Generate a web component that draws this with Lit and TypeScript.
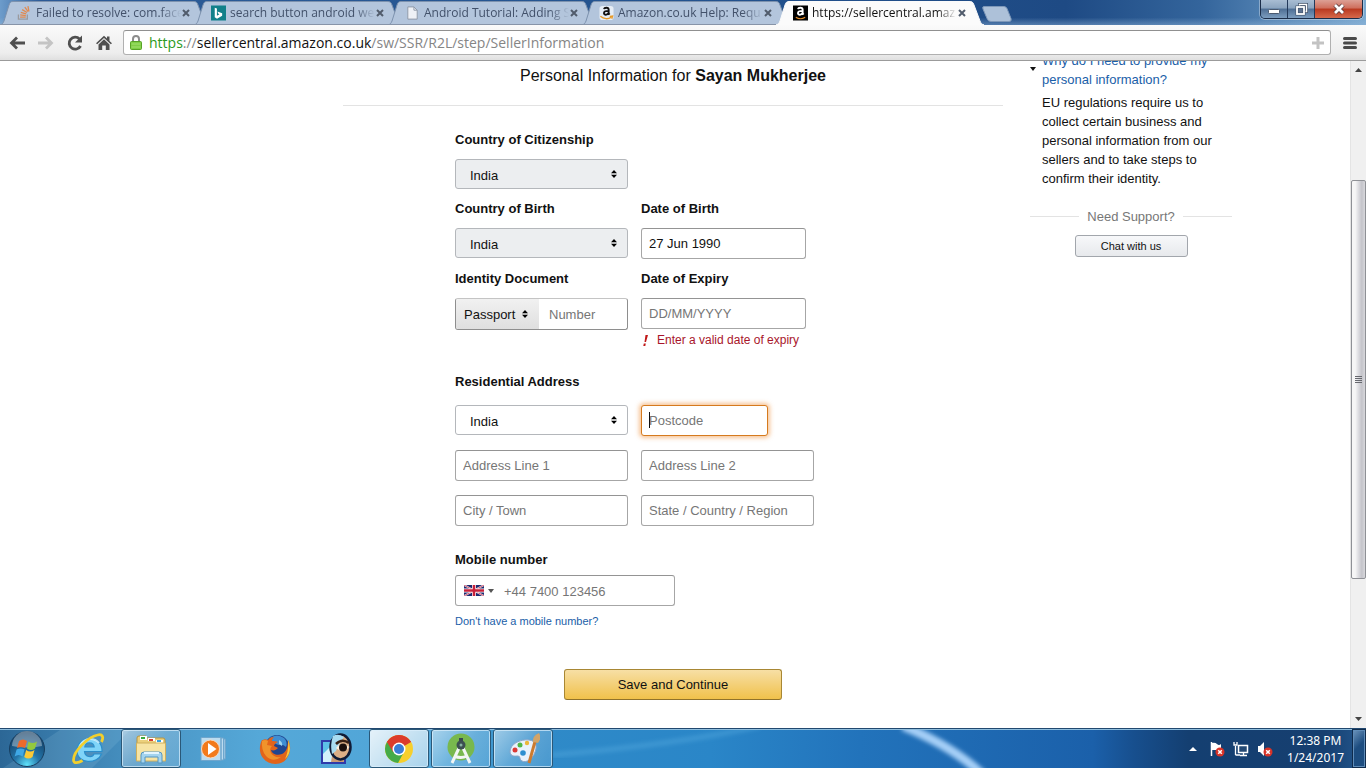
import { LitElement, html, css, svg, nothing } from "lit";
import { customElement } from "lit/decorators.js";

const sortArrows = html`<svg class="sort" viewBox="0 0 6 8" width="6" height="8" aria-hidden="true">
  <path d="M3 0 6 3.200H0zM3 8 0 4.800h6z" fill="#000" />
</svg>`;

const favicons: Record<string, unknown> = {
  stack: svg`<g fill="none" stroke-width="1.4"><path d="M1.5 9.5v5h9.5v-5" stroke="#9a9a9e"/><path d="M3.3 12.4h6M3.4 10l6 .7M4 7.3l5.8 1.700M5.500 4.400l5.200 3.100M8.300 1.800l3.600 4.800M11.700.600l1 5.800" stroke="#e08a50"/></g>`,
  bing: svg`<rect width="16" height="16" fill="#11808a"/><path d="M4 2.500l2.300.800v7.500L9 9.300 7.600 8.600 6.900 6.500l5 1.800v2.600L6.400 14 4 12.600z" fill="#fff"/>`,
  file: svg`<path d="M3 1.500h6.500L13 5v9.500H3z" fill="#eef1f6" stroke="#8e98a8"/><path d="M9.500 1.500V5H13" fill="none" stroke="#8e98a8"/>`,
  amazon: svg`<rect x=".5" y=".5" width="15" height="15" rx="3" fill="#e6edf5"/><path d="M5.300 3.900C5.700 1.900 10.300 1.600 10.300 4.500v3.900l1 1.300M10 5.700C6.800 5.700 5.300 6.600 5.300 8.200c0 2.200 3.600 2.300 4.900-.3" fill="none" stroke="#111" stroke-width="2"/><path d="M1.500 11.500c3.700 3.300 8.500 3.300 11.500 1M11.500 11.500l3-.2-.9 2.800" fill="none" stroke="#e79a28" stroke-width="1.400"/>`,
  amazonDark: svg`<rect width="16" height="16" fill="#000"/><path d="M5.300 3.900C5.700 1.900 10.300 1.600 10.300 4.500v3.900l1 1.300M10 5.700C6.800 5.700 5.300 6.600 5.300 8.200c0 2.200 3.600 2.300 4.900-.3" fill="none" stroke="#fff" stroke-width="2"/><path d="M3 12.500c3 2 7 2 10 0" fill="none" stroke="#e08a28" stroke-width="1.200"/>`,
};

const tabs = [
  { icon: "stack", title: "Failed to resolve: com.face" },
  { icon: "bing", title: "search button android wel" },
  { icon: "file", title: "Android Tutorial: Adding S" },
  { icon: "amazon", title: "Amazon.co.uk Help: Requ" },
  { icon: "amazonDark", title: "https://sellercentral.amaz", active: true },
];

@customElement("browser-chrome")
class BrowserChrome extends LitElement {
  static styles = css`
    :host { display: block; font-family: "Open Sans", "Noto Sans", sans-serif; }
    button { border: 0; padding: 0; margin: 0; background: none; font: inherit; color: inherit; display: flex; align-items: center; justify-content: center; }
    .strip { display: flex; height: 25px; background:
      linear-gradient(to bottom, rgba(255,255,255,0) 70%, rgba(150,185,220,.45)),
      linear-gradient(to right, #6d9ccb 0, #2c5a96 3%, #2a5a96 15%, #23538f 50%, #1e4a84 78%, #34659c 88%, #7ba9d0 100%); }
    .tab { position: relative; flex: 0 1 208px; min-width: 0; height: 25px; margin-right: -14px; display: flex; align-items: center; padding: 1px 18px 0 17px; box-sizing: border-box; color: #42516a; }
    .tab.active { color: #111; z-index: 3; }
    .shape { position: absolute; inset: 0; width: 100%; height: 25px; }
    .favicon { position: relative; flex: none; width: 15px; height: 16px; margin-right: 4px; }
    .title { position: relative; flex: 1; min-width: 0; overflow: hidden; white-space: nowrap; text-align: left; font-size: 12px; line-height: 18px; -webkit-mask-image: linear-gradient(to right, #000 86%, transparent); mask-image: linear-gradient(to right, #000 86%, transparent); }
    .close { position: relative; flex: none; width: 9px; height: 16px; }
    .plus-tab { width: 30px; height: 16px; margin: 6px 0 0 12px; }
    .grow { flex: 1; }
    .window { display: flex; height: 18px; margin-right: 3px; border: 1px solid #1b2d49; border-top: 0; border-radius: 0 0 5px 5px; overflow: hidden; box-shadow: 0 0 0 1px rgba(255,255,255,.35); }
    .window button { width: 27px; height: 18px; border-right: 1px solid #23395a; background: linear-gradient(#a9bdd3, #8ba4bf 45%, #4e6e94 50%, #7c9dbf); }
    .window .exit { width: 47px; border: 0; background: linear-gradient(#dca095, #cf6e5c 45%, #b93920 50%, #d6694b); }
    .bar { display: flex; align-items: center; height: 36px; box-sizing: border-box; border-bottom: 1px solid #9b9b9b; background: linear-gradient(#fafafa, #ededed 80%, #e0e0e0); padding: 0 9px 0 8px; }
    .nav { display: flex; gap: 11px; margin-right: 10px; }
    .nav button { width: 18px; height: 20px; }
    .address { flex: 1; min-width: 0; display: flex; align-items: center; height: 25px; box-sizing: border-box; background: #fff; border: 1px solid #b0b0b0; border-top-color: #909090; border-radius: 3px; padding: 0 6px 0 5px; margin-right: 12px; }
    .url { flex: 1; min-width: 0; white-space: nowrap; overflow: hidden; margin-left: 6px; font-size: 14px; line-height: 22px; color: #858585; }
    .secure { color: #2a9a20; }
    .host { color: #111; }
  `;

  render() {
    return html`
      <div class="strip" role="tablist">
        ${tabs.map((t) => html`
          <div class="tab ${t.active ? "active" : ""}" role="tab">
            <svg class="shape" viewBox="0 0 208 25" preserveAspectRatio="none" aria-hidden="true">
              <path d="M0 25C3 24 3 23 4 21L9 5C10 2 11 1.500 13 1.500H193C196 1.500 197 2 198 5L204 21C205 23 205 24 208 25Z"
                fill=${t.active ? "#fbfbfb" : "#b3c5dc"} stroke=${t.active ? "#fbfbfb" : "#7d92ae"} />
              ${t.active ? nothing : svg`<path d="M0 24.500H208" stroke="#8794a8"/>`}
            </svg>
            <svg class="favicon" viewBox="0 0 16 16" aria-hidden="true">${favicons[t.icon]}</svg>
            <span class="title">${t.title}</span>
            <button class="close" aria-label="Close tab">
              <svg width="8" height="8" viewBox="0 0 8 8"><path d="M1 1l6 6M7 1 1 7" stroke="#515c6c" stroke-width="2"/></svg>
            </button>
          </div>`)}
        <button class="plus-tab" aria-label="New tab">
          <svg width="30" height="16" viewBox="0 0 30 16"><path d="M2 .500h20q2 0 3 2l4 10q1 3-2 3H9q-3 0-4-3L1 3Q0 .500 2 .500z" fill="#adc1d9" stroke="#7e98b9"/></svg>
        </button>
        <div class="grow"></div>
        <div class="window">
          <button aria-label="Minimize"><svg width="14" height="12"><rect x="1.500" y="6.500" width="11" height="4" rx="1" fill="#fff" stroke="#4a5a70"/></svg></button>
          <button aria-label="Restore"><svg width="13" height="13"><path d="M4.500 1.500h7v7h-7z" fill="none" stroke="#43536a" stroke-width="3"/><path d="M4.500 1.500h7v7h-7z" fill="none" stroke="#fff" stroke-width="1.500"/><rect x="2" y="4" width="7" height="7" fill="#5c7290" stroke="#43536a" stroke-width="3"/><rect x="2" y="4" width="7" height="7" fill="none" stroke="#fff" stroke-width="1.800"/></svg></button>
          <button class="exit" aria-label="Close window"><svg width="14" height="12"><path d="M3 2l8 8M11 2l-8 8" stroke="#5b3a3c" stroke-width="4.500"/><path d="M3 2l8 8M11 2l-8 8" stroke="#fff" stroke-width="2.800"/></svg></button>
        </div>
      </div>
      <div class="bar">
        <div class="nav">
          <button aria-label="Back"><svg width="18" height="16"><path d="M17 8H3M9 2.500 3.500 8 9 13.500" fill="none" stroke="#4f4f4f" stroke-width="2.800"/></svg></button>
          <button aria-label="Forward"><svg width="18" height="16"><path d="M1 8h14M9 2.500 14.500 8 9 13.500" fill="none" stroke="#c4c4c4" stroke-width="2.800"/></svg></button>
          <button aria-label="Reload"><svg width="18" height="18"><path d="M14.500 12A6 6 0 1 1 13.500 5" fill="none" stroke="#4f4f4f" stroke-width="2.800"/><path d="M16 1.500V8.500H9z" fill="#4f4f4f"/></svg></button>
          <button aria-label="Home"><svg width="16" height="16"><path d="M0 8.300 8 .800l3 2.800V1.500h2.500V6L16 8.300l-1.200 1L8 3 1.200 9.300z" fill="#4f4f4f"/><path d="M8 4.300l5.500 5.200V15H9.800v-4.500H6.200V15H2.500V9.500z" fill="#4f4f4f"/></svg></button>
        </div>
        <div class="address">
          <svg width="14" height="17" aria-hidden="true"><path d="M4 8V5a3 3 0 0 1 6 0v3" fill="none" stroke="#8c8c8c" stroke-width="2"/><rect x="1.500" y="7.500" width="11" height="8" rx="1" fill="#7fce45" stroke="#57a226"/><path d="M2.500 10h9M2.500 13h9" stroke="#a5e073"/></svg>
          <div class="url"><span class="secure">https</span>://<span class="host">sellercentral.amazon.co.uk</span>/sw/SSR/R2L/step/SellerInformation</div>
          <svg width="12" height="12" aria-hidden="true"><path d="M6 0v12M0 6h12" stroke="#c3c3c3" stroke-width="3"/></svg>
        </div>
        <button aria-label="Menu"><svg width="14" height="14"><path d="M1.500 2.500h11M1.500 7h11M1.500 11.500h11" stroke="#4a4a4a" stroke-width="3" stroke-linecap="round"/></svg></button>
      </div>`;
  }
}

@customElement("seller-page")
class SellerPage extends LitElement {
  static styles = css`
    :host { display: flex; min-height: 0; background: #fff; color: #111; font: 13px/19px "Liberation Sans", Arial, sans-serif; }
    .view { flex: 1; min-width: 0; overflow: hidden; }
    .container { display: flex; gap: 27px; max-width: 1114px; margin: 0 auto; }
    .main { flex: 1; min-width: 0; margin-left: 225px; padding-top: 3px; }
    h1 { margin: 0; padding-bottom: 17px; border-bottom: 1px solid #e3e3e3; font-size: 16px; line-height: 24px; font-weight: 400; text-align: center; }
    form { display: flex; flex-direction: column; max-width: 436px; margin: 24px auto 0; }
    label, legend { display: block; padding: 0; font-weight: 700; margin-bottom: 10px; }
    fieldset { border: 0; padding: 0; margin: 0; min-width: 0; }
    .row { display: flex; gap: 13px; margin-bottom: 10px; }
    .cell { width: 173px; }
    .date { width: 165px; }
    input, select { box-sizing: border-box; font: inherit; color: #111; margin: 0; height: 31px; width: 100%; border: 1px solid #a6a6a6; border-top-color: #949494; border-radius: 3px; background: #fff; padding: 0 7px; outline: 0; }
    input::placeholder { color: #767676; opacity: 1; }
    .pick { position: relative; }
    .pick select { appearance: none; height: 30px; padding: 2px 14px 0; display: block; border-color: #b4b7bb; }
    .pick.locked select { background: #eceef0; }
    .sort { position: absolute; right: 11px; top: 11px; pointer-events: none; }
    .document { display: flex; height: 32px; box-sizing: border-box; border: 1px solid #8e8e8e; border-top-color: #c4c4c4; border-radius: 3px; overflow: hidden; }
    .document .pick { flex: none; width: 83px; }
    .document select { border: 0; border-radius: 0; background: linear-gradient(#f1f1f1, #dfdfdf); padding: 0 8px; }
    .document input { flex: 1; min-width: 0; border: 0; height: 30px; padding: 0 10px; }
    .error { display: flex; align-items: center; gap: 9px; margin: 2px 0 0 2px; font-size: 12px; color: #a8152a; white-space: nowrap; }
    .address { margin-top: 12px; }
    .address legend { margin-bottom: 14px; }
    .address .row { margin-bottom: 14px; }
    .postcode { position: relative; width: 127px; }
    .postcode input { border-color: #d57a1e; box-shadow: 0 0 4px 2px rgba(240,140,50,.5); }
    .caret { position: absolute; left: 8px; top: 7px; width: 1px; height: 16px; background: #111; }
    .mobile { margin-top: 10px; }
    .mobile label { margin-bottom: 6px; }
    .phone { display: flex; align-items: center; width: 220px; height: 31px; box-sizing: border-box; border: 1px solid #a6a6a6; border-top-color: #949494; border-radius: 3px; padding-left: 8px; }
    .phone button { display: flex; align-items: center; gap: 4px; border: 0; padding: 0; background: none; }
    .phone input { flex: 1; min-width: 0; border: 0; height: 29px; padding: 2px 10px 0; background: none; }
    a { color: #1a5ea8; text-decoration: none; }
    .help { display: block; font-size: 11px; line-height: 16px; margin-top: 7px; }
    .save { align-self: center; width: 218px; height: 31px; margin-top: 40px; border: 1px solid #a88734; border-bottom-color: #8f722b; border-radius: 3px; background: linear-gradient(#f7dfa5, #f0c14b); font: inherit; color: #111; }
    aside { flex: none; width: 202px; margin-top: -10px; }
    .question { display: flex; align-items: flex-start; }
    .question svg { flex: none; margin: 16px 6px 0 0; }
    .answer { margin: 4px 20px 0 12px; }
    .support { display: flex; align-items: center; gap: 8px; margin-top: 19px; color: #777; }
    .support::before, .support::after { content: ""; flex: 1; border-top: 1px solid #e3e3e3; }
    .chat { display: block; width: 113px; height: 22px; margin: 9px auto 0; padding: 0; border: 1px solid #a2a6ac; border-radius: 3px; background: linear-gradient(#f7f8fa, #e7e9ec); font: 11px/18px "Liberation Sans", Arial, sans-serif; color: #111; }
    .scroll { flex: none; width: 16px; box-sizing: border-box; display: flex; flex-direction: column; background: #f0f0f0; border-left: 1px solid #e4e4e4; }
    .scroll button { height: 17px; border: 0; padding: 0; background: none; display: flex; align-items: center; justify-content: center; }
    .above { flex: 102; }
    .thumb { flex: 399; display: flex; align-items: center; justify-content: center; border: 1px solid #8f9196; border-radius: 2px; background: linear-gradient(to right, #f6f6f6 25%, #dcdce0 50%, #c4c4ca 75%, #d8d8dc); }
    .below { flex: 132; }
  `;

  private country(id: string, locked: boolean) {
    return html`<div class="pick ${locked ? "locked" : ""}">
      <select id=${id} aria-label="Country"><option>India</option></select>${sortArrows}
    </div>`;
  }

  render() {
    return html`
      <div class="view"><div class="container">
        <main class="main">
          <h1>Personal Information for <b>Sayan Mukherjee</b></h1>
          <form>
            <div class="row"><div class="cell"><label for="citizen">Country of Citizenship</label>${this.country("citizen", true)}</div></div>
            <div class="row">
              <div class="cell"><label for="birth">Country of Birth</label>${this.country("birth", true)}</div>
              <div class="date"><label for="dob">Date of Birth</label><input id="dob" .value=${"27 Jun 1990"} /></div>
            </div>
            <div class="row">
              <div class="cell">
                <label for="doc">Identity Document</label>
                <div class="document">
                  <div class="pick"><select id="doc"><option>Passport</option></select>${sortArrows}</div>
                  <input aria-label="Document number" placeholder="Number" />
                </div>
              </div>
              <div class="date">
                <label for="expiry">Date of Expiry</label><input id="expiry" placeholder="DD/MM/YYYY" />
                <div class="error"><svg width="5" height="11" viewBox="0 0 5 11" aria-hidden="true"><path d="M2.500 0H5L3 7H1.500zM.800 8.500h2L2.300 11h-2z" fill="#c01818"/></svg>Enter a valid date of expiry</div>
              </div>
            </div>
            <fieldset class="address">
              <legend>Residential Address</legend>
              <div class="row">
                <div class="cell">${this.country("residence", false)}</div>
                <div class="postcode"><input aria-label="Postcode" placeholder="Postcode" /><span class="caret"></span></div>
              </div>
              <div class="row">
                <div class="cell"><input aria-label="Address Line 1" placeholder="Address Line 1" /></div>
                <div class="cell"><input aria-label="Address Line 2" placeholder="Address Line 2" /></div>
              </div>
              <div class="row">
                <div class="cell"><input aria-label="City / Town" placeholder="City / Town" /></div>
                <div class="cell"><input aria-label="State / Country / Region" placeholder="State / Country / Region" /></div>
              </div>
            </fieldset>
            <div class="mobile">
              <label for="mobile">Mobile number</label>
              <div class="phone">
                <button type="button" aria-label="Country code">
                  <svg width="20" height="11" viewBox="0 0 20 11"><rect width="20" height="11" fill="#1d2a70"/><path d="M0 0l20 11M20 0 0 11" stroke="#e8e8f0" stroke-width="1.800"/><path d="M0 0l20 11M20 0 0 11" stroke="#d0203a" stroke-width=".700"/><path d="M10 0v11M0 5.500h20" stroke="#fff" stroke-width="4"/><path d="M10 0v11M0 5.500h20" stroke="#c8203a" stroke-width="2.600"/></svg>
                  <svg width="6" height="4"><path d="M0 0h6L3 4z" fill="#555"/></svg>
                </button>
                <input id="mobile" placeholder="+44 7400 123456" />
              </div>
              <a class="help" href="#mobile">Don't have a mobile number?</a>
            </div>
            <button class="save" type="button">Save and Continue</button>
          </form>
        </main>
        <aside>
          <div class="question"><svg width="6" height="4" aria-hidden="true"><path d="M0 0h6L3 4z" fill="#111"/></svg><a href="#why">Why do I need to provide my personal information?</a></div>
          <div class="answer">EU regulations require us to collect certain business and personal information from our sellers and to take steps to confirm their identity.</div>
          <div class="support">Need Support?</div>
          <button class="chat">Chat with us</button>
        </aside>
      </div></div>
      <div class="scroll">
        <button aria-label="Scroll up"><svg width="7" height="4"><path d="M3.500 0 7 4H0z" fill="#444"/></svg></button>
        <div class="above"></div>
        <div class="thumb"><svg width="7" height="8"><path d="M0 .500h7M0 2.500h7M0 4.500h7M0 6.500h7" stroke="#66686e"/></svg></div>
        <div class="below"></div>
        <button aria-label="Scroll down"><svg width="7" height="4"><path d="M0 0h7L3.500 4z" fill="#444"/></svg></button>
      </div>`;
  }
}

const apps = [
  { name: "Internet Explorer", open: false, art: svg`<path d="M30 19.500H12.500c.5 6 8 6.500 9.500 2.500h7.500C26 32 5 33 5 18.500 5 3 31 2 30 19.500zM12.800 15h9.400c-.5-5.500-8.900-5.500-9.400 0z" fill="#7fd4f8" stroke="#2a8ecb" stroke-width="1.200"/><path d="M8 14q3-7 10-7 6 0 9 4" fill="none" stroke="#d6f4ff" stroke-width="2" opacity=".8"/><path d="M29.500 10c2.500-5 1-8.500-4-7C16 5 1.500 19 1.500 28c0 4 5 3 9 .5" fill="none" stroke="#f2cf2c" stroke-width="2.800"/>` },
  { name: "Windows Explorer", open: true, art: svg`<path d="M3 6q0-2 2-2h7l1 2h16q2 0 2 2v20H3z" fill="#ecd07c" stroke="#b69440"/><path d="M6 4h7v4H6zM14 6h7v3h-7zM22 8h7v3h-7z" fill="#fff"/><path d="M7 5h4v2H7z" fill="#3aaa3c"/><path d="M15 7h4v2h-4z" fill="#d64030"/><path d="M23 8h4v2h-4z" fill="#38a2dd"/><path d="M2.500 11h29v18h-29z" fill="#f7e4a4" stroke="#d0b05c"/><path d="M7 31v-8q0-3 3-3h15q3 0 3 3v8h-4v-6H11v6z" fill="#a4d4ef" stroke="#5596c2"/><path d="M10 21h15" stroke="#e3f5ff" stroke-width="2"/>` },
  { name: "Media Player", open: false, art: svg`<path d="M5 5.500h20v23H5zM25 6h2.500v22H25zM28 7h1.500v20H28z" fill="#bcdcf0" stroke="#6fa6cd"/><circle cx="14.500" cy="17" r="9" fill="#f27a1c" stroke="#f7d8be"/><path d="M12 11v12l8.500-6z" fill="#fff"/>` },
  { name: "Firefox", open: false, art: svg`<circle cx="19" cy="15.500" r="12.500" fill="#21468f"/><path d="M12 6q7-5 14 0 4 4 2 9-3-3-7-2-5-1-9-7z" fill="#3f8ed2"/><path d="M21 8q4 2 3 6l-3-2z" fill="#9ed5ee"/><path d="M4 8c-3 6-3 13 1 18 6 8 19 8 24 0 4-6 4-13 1-18 0 8-2 12-6 14-5 2-10 0-11-4 3 1 5 0 7-2l-4-2c0-2 2-3 4-4-2-1-4-1-6-1 0-2 1-3 2-4-3 0-5 1-6 3-2-1-4-1-5 0z" fill="#e2641a"/><path d="M4 9q3-2 6 0l-1 4 5 1q-3 3-1 7 3 5 10 4-8 6-15-1-5-6-4-15z" fill="#f0932b"/><path d="M30 8q5 12-3 19 4-8 3-19z" fill="#f8c83c"/>` },
  { name: "Magnifier", open: false, art: svg`<path d="M2 9h23v22H2z" fill="#5cc0e8" stroke="#2f3bab" stroke-width="2"/><path d="M3 22l9-9 9 17H3z" fill="#d2f1fc"/><path d="M11 30q1-10 6-16l7 4v12z" fill="#c99a76"/><ellipse cx="20.500" cy="15" rx="10" ry="12.500" fill="#dcae86" stroke="#101b36" stroke-width="2.500"/><path d="M13 4q-3 8-1 18l4-3q3-8 8-14-6-4-11-1z" fill="#a9dcf1"/><path d="M16 16q6-8 13-1-5 8-13 1" fill="#fff0df"/><circle cx="23" cy="15.500" r="4" fill="#1c0f0c"/><path d="M16 12q6-6 13-1" stroke="#392014" stroke-width="2.500" fill="none"/>` },
  { name: "Chrome", open: true, art: svg`<circle cx="17" cy="17" r="14" fill="#f7cf2c"/><path d="M17 17 4.900 10A14 14 0 0 1 29.100 10z" fill="#dc3c2c"/><path d="M17 17 4.900 10A14 14 0 0 0 16 31l6-11z" fill="#45ab48"/><path d="M17 10h12a14 14 0 0 0-24 0l6 10z" fill="#dc3c2c"/><circle cx="17" cy="17" r="6.500" fill="#fff"/><circle cx="17" cy="17" r="5" fill="#3b7ed6"/>` },
  { name: "Android Studio", open: true, art: svg`<circle cx="17" cy="15" r="13.500" fill="#78b84e"/><path d="M15 16 8 31M19 16l7 15M10 24q7 3 13 0" stroke="#f2f6f4" stroke-width="3" fill="none"/><path d="M15 6h4v5h-4z" fill="#3a4750"/><circle cx="17" cy="13" r="4.500" fill="#3c5051"/><circle cx="17" cy="13" r="1.500" fill="#86b2a2"/>` },
  { name: "Paint", open: true, art: svg`<path d="M4 20C4 12 14 7 23 8c8 1 8 7 6 12-3 8-9 11-13 9-3-1-1-5-4-5s-7 1-8-4z" fill="#eaf2fb" stroke="#8ca6c8"/><circle cx="9" cy="18" r="2.500" fill="#dc3a36"/><circle cx="14" cy="13" r="2.500" fill="#50b648"/><circle cx="21" cy="11" r="2.200" fill="#ebb73a"/><circle cx="17" cy="21" r="2.800" fill="#2f8fd0"/><path d="M30 6 23 31" stroke="#cc7b30" stroke-width="3"/><path d="M27 10q-1-6 6-9 3 5-1 10z" fill="#d2a468"/>` },
];

const blocked = svg`<circle cx="11" cy="11" r="4.500" fill="#d83328"/><path d="M9.200 9.200l3.600 3.600M12.800 9.200l-3.600 3.600" stroke="#fff" stroke-width="1.500"/>`;

@customElement("task-bar")
class TaskBar extends LitElement {
  static styles = css`
    :host { display: flex; position: relative; height: 40px; box-sizing: border-box; border-top: 1px solid #22486f; box-shadow: inset 0 1px 0 #8fbede; color: #fff; font: 12px/17px "Noto Sans", "Open Sans", sans-serif;
      background: linear-gradient(to right, #2c6796 0, #3a7eae 5%, #4a96c6 11%, #55a8d8 19%, #4fa5d8 32%, #2f8ac8 40%, #2a86c8 52%, #2273bb 63%, #1b60aa 80%, #174f8e 83%, #143f71 87%, #163f70 97%, #24588f 100%); }
    button { border: 0; padding: 0; background: none; display: flex; align-items: center; justify-content: center; }
    .glow { position: absolute; inset: 1px 0 0; width: 100%; height: 38px; }
    .start { position: relative; width: 54px; }
    .apps { position: relative; display: flex; gap: 2px; margin-left: 5px; flex: 1; }
    .app { width: 60px; height: 39px; box-sizing: border-box; border: 1px solid transparent; border-radius: 3px; }
    .app.open { border-color: #2a5878; box-shadow: inset 0 0 0 1px rgba(220,240,252,.7); background: linear-gradient(135deg, rgba(255,255,255,.5), rgba(255,255,255,.2) 50%, rgba(255,255,255,.12)); }
    .app.current { background: linear-gradient(135deg, rgba(255,255,255,.85), rgba(255,255,255,.5)); }
    .tray { position: relative; display: flex; align-items: center; gap: 8px; }
    .clock { text-align: center; margin: 0 8px 0 6px; }
    .desktop { position: relative; width: 14px; border: 1px solid #0f2b4c; box-shadow: inset 0 0 0 1px #5f8cb8; background: linear-gradient(135deg, #6d95bd, #1d4d80 45%); }
  `;

  render() {
    return html`
      <svg class="glow" viewBox="0 0 1366 38" preserveAspectRatio="none" aria-hidden="true">
        <defs><filter id="soft"><feGaussianBlur stdDeviation="2"/></filter></defs>
        <path d="M0 40 60 0h70L90 40z" fill="#bfe3f7" opacity=".12"/>
        <path d="M552 25Q680 14 760-4" fill="none" stroke="#63b6e6" stroke-width="5" opacity=".35" filter="url(#soft)"/>
        <path d="M903-4Q952 16 982 44" fill="none" stroke="#a5cff7" stroke-width="9" filter="url(#soft)"/>
      </svg>
      <button class="start" aria-label="Start">
        <svg width="38" height="38" viewBox="0 0 38 38">
          <defs><radialGradient id="orb" cx=".5" cy=".95" r=".9"><stop offset="0" stop-color="#5fe3fb"/><stop offset=".4" stop-color="#2475a9"/><stop offset="1" stop-color="#123d63"/></radialGradient></defs>
          <circle cx="19" cy="19" r="17.500" fill="url(#orb)" stroke="#173e60"/>
          <path d="M4 16a15 15 0 0 1 30 0q-15 3-30 0z" fill="#fff" opacity=".35"/>
          <path d="M11 11q4-3 8 0l-2 7q-4-2-8 0z" fill="#ec6a2c"/><path d="M20.500 11.500q4 3 8.500 0l-2 7q-4 3-8 0z" fill="#93c93e"/>
          <path d="M8.600 19.500q4-2 8 0l-2 7q-4-3-8 0z" fill="#3fa8e6"/><path d="M18.200 20q4 3 8.300 0l-2 7q-4 3-8.300 0z" fill="#fbc936"/>
        </svg>
      </button>
      <div class="apps">
        ${apps.map((a) => html`<button class="app ${a.open ? "open" : ""} ${a.name === "Chrome" ? "current" : ""}" aria-label=${a.name}>
          <svg width="34" height="34" viewBox="0 0 34 34">${a.art}</svg></button>`)}
      </div>
      <div class="tray">
        <svg width="16" height="16"><path d="M4 10h8L8 6z" fill="#fff"/></svg>
        <svg width="16" height="16"><path d="M2.500 1v14" stroke="#fff" stroke-width="1.500"/><path d="M3 2q3-1 5 1t4 0v6H3z" fill="#fff"/>${blocked}</svg>
        <svg width="16" height="16"><rect x="5.500" y="4.500" width="9" height="7" fill="#254a74" stroke="#fff" stroke-width="1.500"/><path d="M7 14.500h7M10.500 12v2M2.500 5v9M1 1v3h3V1M2.500 14H7" stroke="#fff" fill="none" stroke-width="1.300"/></svg>
        <svg width="16" height="16"><path d="M1 5h2l4-4v14L3 11H1z" fill="#fff"/>${blocked}</svg>
        <div class="clock">12:38 PM<br />1/24/2017</div>
      </div>
      <button class="desktop" aria-label="Show desktop"></button>`;
  }
}

@customElement("app-root")
class AppRoot extends LitElement {
  static styles = css`
    :host { display: flex; flex-direction: column; height: 100vh; overflow: hidden; }
    .page { flex: 1; }
    .fixed { flex: none; }
  `;

  render() {
    return html`
      <browser-chrome class="fixed"></browser-chrome>
      <seller-page class="page"></seller-page>
      <task-bar class="fixed"></task-bar>`;
  }
}
